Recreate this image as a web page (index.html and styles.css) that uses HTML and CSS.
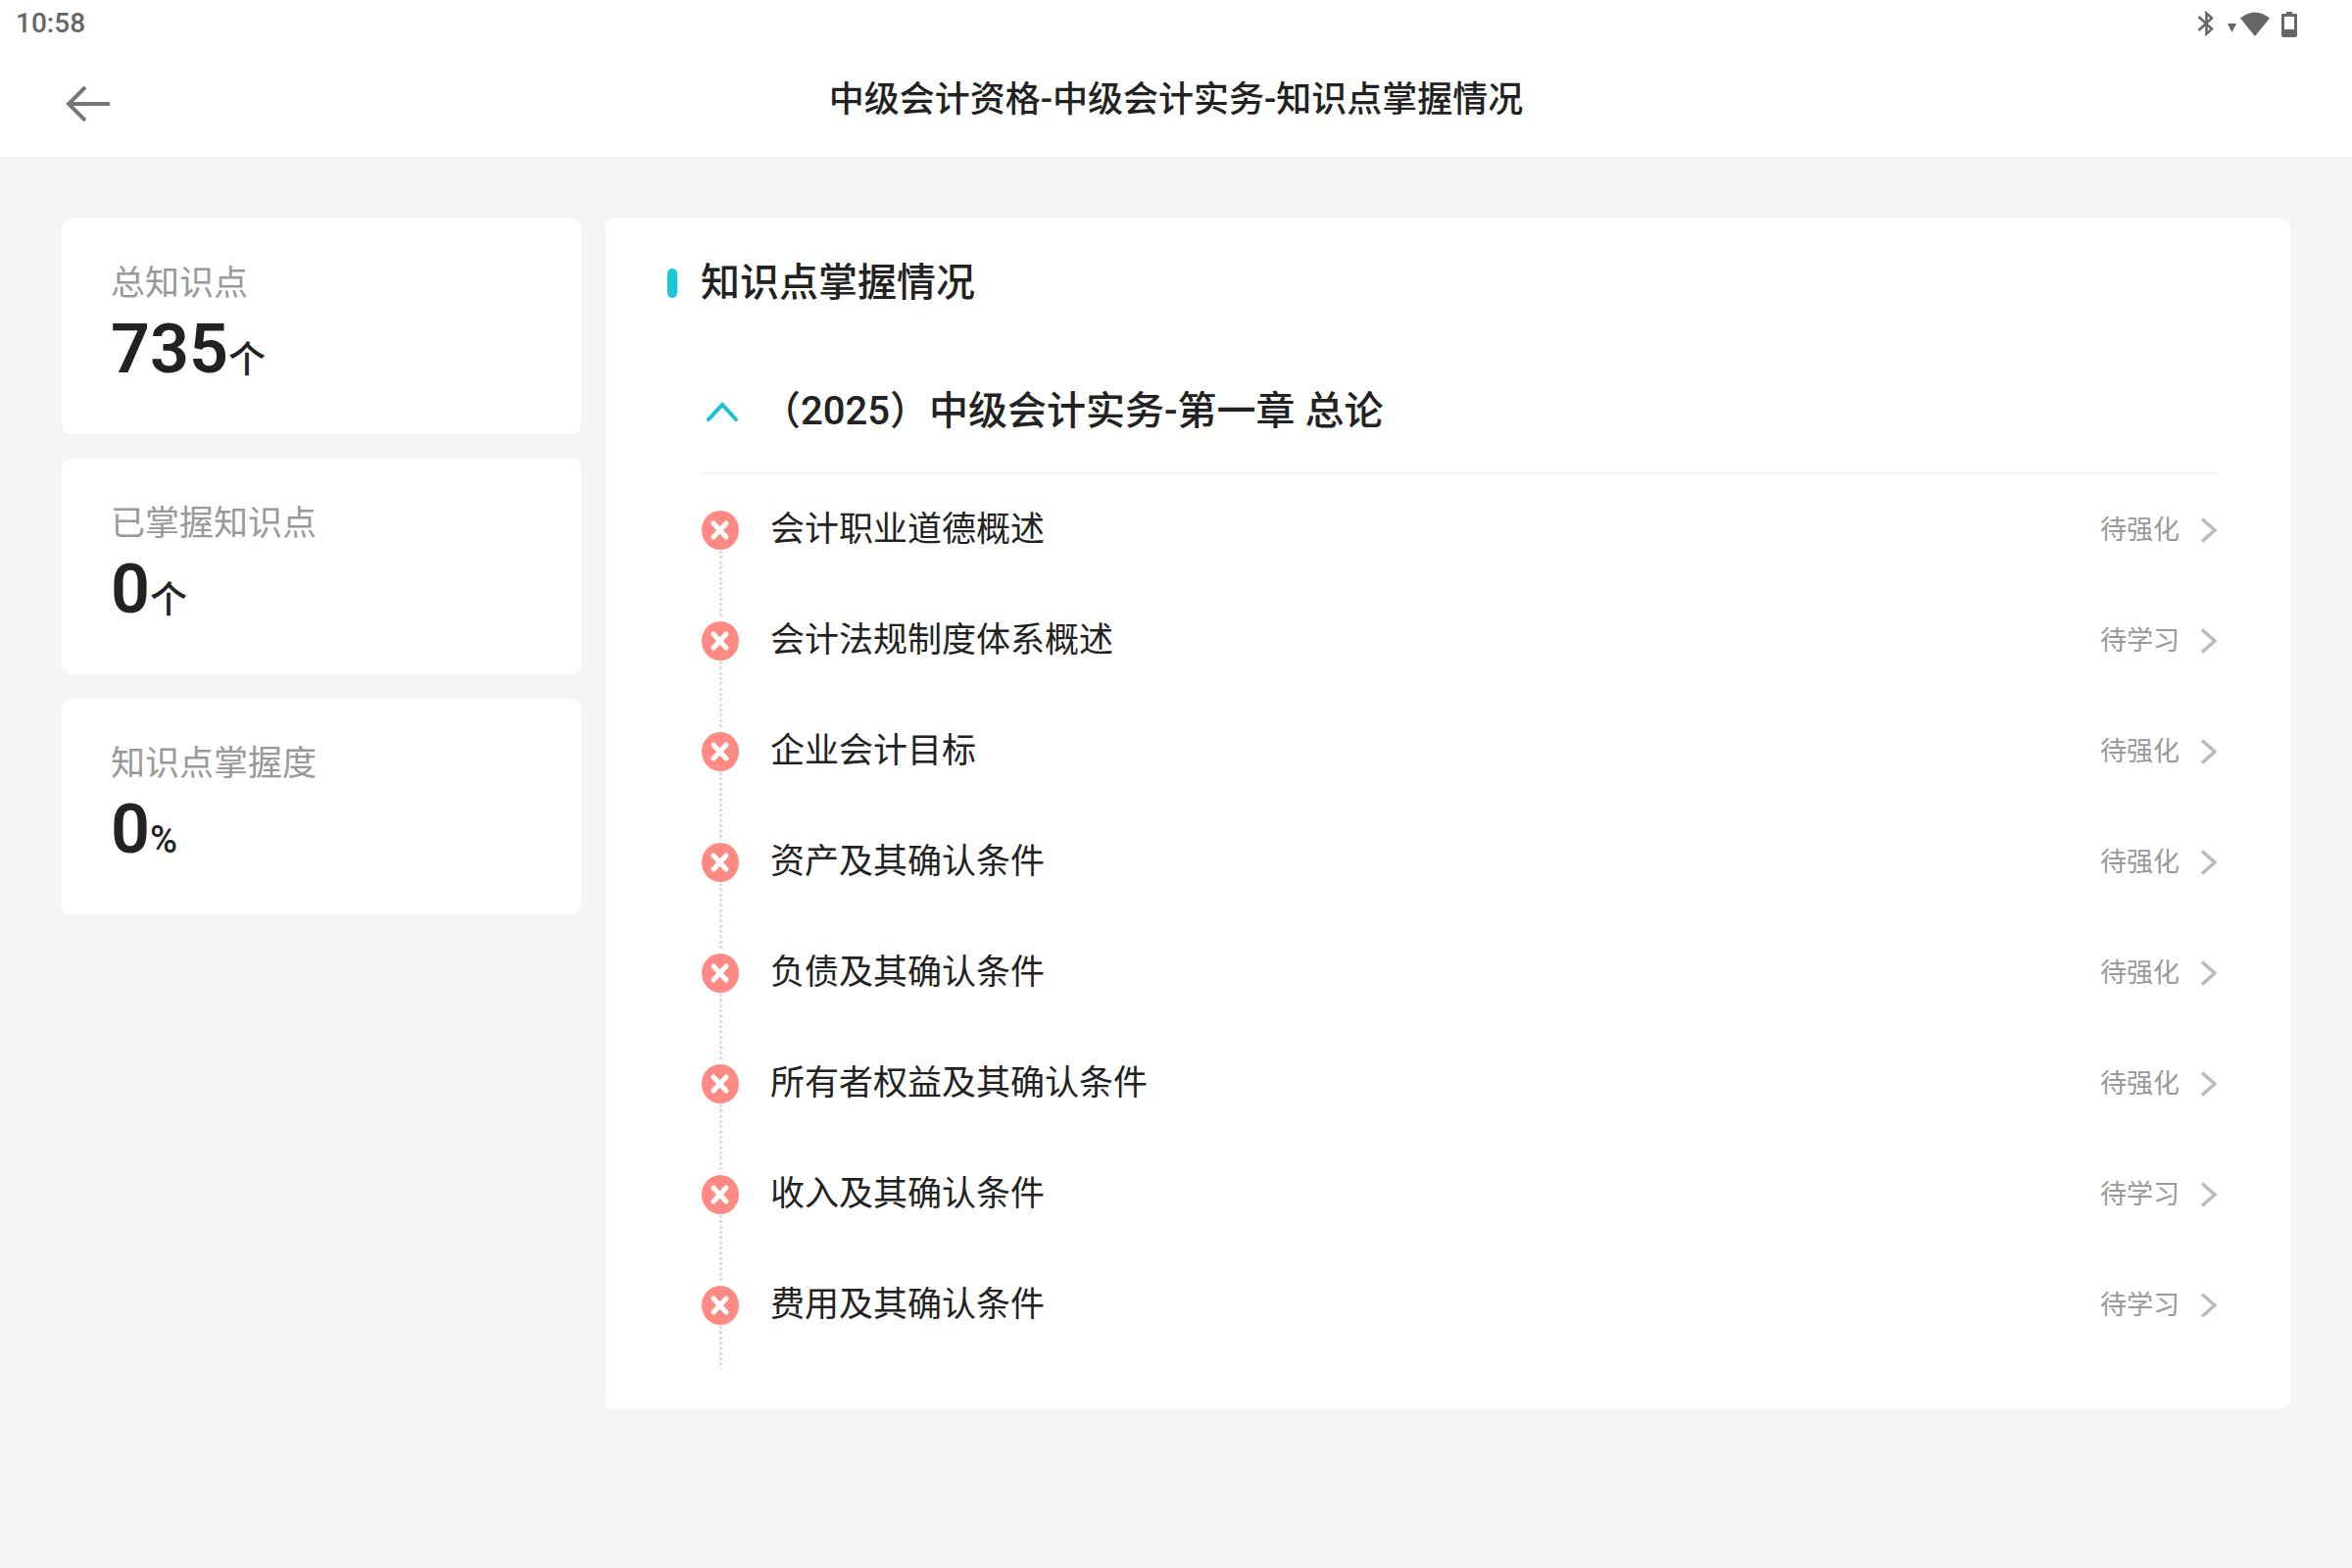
FILE: index.html
```html
<!DOCTYPE html>
<html lang="zh-CN">
<head>
    <meta charset="UTF-8">
    <meta name="viewport" content="width=device-width, initial-scale=1.0">
    <title>中级会计资格-中级会计实务-知识点掌握情况</title>
    <link rel="stylesheet" href="styles.css">
</head>
<body>
    <!-- icons shared by the list rows -->
    <svg class="sprite" aria-hidden="true">
        <symbol id="icon-wrong" viewBox="0 0 38 40">
            <ellipse cx="19" cy="20" rx="19" ry="20" fill="#ff8a84"/>
            <path d="M12 13 25 27M25 13 12 27" stroke="#fff" stroke-width="5" stroke-linecap="round"/>
        </symbol>
        <symbol id="icon-next" viewBox="0 0 16 26">
            <path d="M1 1.500 14 13 1 24.500" fill="none" stroke="#bbb" stroke-width="3.500"/>
        </symbol>
    </svg>

    <div class="status-bar">
        <span class="clock">10:58</span>
        <svg class="status-icons" viewBox="0 0 102 28" aria-hidden="true">
            <path d="M1.500 7 15 19.500 9.500 24.500V3.500L15 8.500 1.500 21" fill="none" stroke="#666" stroke-width="2.500"/>
            <path d="M31 14h9l-4.500 9z" fill="#666"/>
            <path d="M44 8.500Q59-3.500 74 8.500L59 27z" fill="#666"/>
            <path d="M91 2h6v2h4q1 0 1 1v21q0 2-2 2H88q-2 0-2-2V5q0-1 1-1h4zM89 7v13h10V7z" fill="#666" fill-rule="evenodd"/>
        </svg>
    </div>

    <header class="header">
        <button type="button" class="back" aria-label="返回">
            <svg width="44" height="36" viewBox="0 0 44 36">
                <path d="M44 18H2M19 1 2 18 19 35" fill="none" stroke="#777" stroke-width="4"/>
            </svg>
        </button>
        <h1>中级会计资格-中级会计实务-知识点掌握情况</h1>
    </header>

    <main class="container">
        <aside class="stats">
            <div class="card">
                <div class="label">总知识点</div>
                <div class="value">735<span class="unit">个</span></div>
            </div>
            <div class="card">
                <div class="label">已掌握知识点</div>
                <div class="value">0<span class="unit">个</span></div>
            </div>
            <div class="card">
                <div class="label">知识点掌握度</div>
                <div class="value">0<span class="unit">%</span></div>
            </div>
        </aside>

        <section class="panel">
            <h2>知识点掌握情况</h2>
            <button type="button" class="chapter" aria-expanded="true">
                <svg width="32" height="20" viewBox="0 0 32 20" aria-hidden="true">
                    <path d="M2 18 16 3 30 18" fill="none" stroke="#13c4cf" stroke-width="4" stroke-linecap="round"/>
                </svg>
                <span>（2025）中级会计实务-第一章 总论</span>
            </button>
            <ul class="points">
                <li>
                    <svg class="mark"><use href="#icon-wrong"/></svg>
                    <a href="#"><span class="name">会计职业道德概述</span><span class="state">待强化</span><svg class="next"><use href="#icon-next"/></svg></a>
                </li>
                <li>
                    <svg class="mark"><use href="#icon-wrong"/></svg>
                    <a href="#"><span class="name">会计法规制度体系概述</span><span class="state">待学习</span><svg class="next"><use href="#icon-next"/></svg></a>
                </li>
                <li>
                    <svg class="mark"><use href="#icon-wrong"/></svg>
                    <a href="#"><span class="name">企业会计目标</span><span class="state">待强化</span><svg class="next"><use href="#icon-next"/></svg></a>
                </li>
                <li>
                    <svg class="mark"><use href="#icon-wrong"/></svg>
                    <a href="#"><span class="name">资产及其确认条件</span><span class="state">待强化</span><svg class="next"><use href="#icon-next"/></svg></a>
                </li>
                <li>
                    <svg class="mark"><use href="#icon-wrong"/></svg>
                    <a href="#"><span class="name">负债及其确认条件</span><span class="state">待强化</span><svg class="next"><use href="#icon-next"/></svg></a>
                </li>
                <li>
                    <svg class="mark"><use href="#icon-wrong"/></svg>
                    <a href="#"><span class="name">所有者权益及其确认条件</span><span class="state">待强化</span><svg class="next"><use href="#icon-next"/></svg></a>
                </li>
                <li>
                    <svg class="mark"><use href="#icon-wrong"/></svg>
                    <a href="#"><span class="name">收入及其确认条件</span><span class="state">待学习</span><svg class="next"><use href="#icon-next"/></svg></a>
                </li>
                <li>
                    <svg class="mark"><use href="#icon-wrong"/></svg>
                    <a href="#"><span class="name">费用及其确认条件</span><span class="state">待学习</span><svg class="next"><use href="#icon-next"/></svg></a>
                </li>
            </ul>
        </section>
    </main>
</body>
</html>
```
FILE: styles.css
```css
* {
    box-sizing: border-box;
}
body {
    margin: 0;
    min-height: 100vh;
    background: #f5f5f5;
    color: #222;
    font-family: Roboto, 'Noto Sans CJK SC', sans-serif;
}
h1, h2, ul {
    margin: 0;
    padding: 0;
}
button {
    padding: 0;
    border: 0;
    background: none;
    color: inherit;
    font: inherit;
    cursor: pointer;
}
svg {
    display: block;
    flex: none;
}
.sprite {
    position: absolute;
    width: 0;
    height: 0;
}

/* top bars */
.status-bar {
    display: flex;
    justify-content: space-between;
    align-items: center;
    height: 48px;
    padding: 0 56px 0 16px;
    background: #fff;
}
.clock {
    color: #666;
    font-size: 28px;
    font-weight: 500;
    line-height: 32px;
}
.status-icons {
    width: 102px;
    height: 28px;
}
.header {
    display: grid;
    grid-template-columns: 1fr auto 1fr;
    align-items: start;
    height: 112px;
    padding: 28px 68px;
    background: #fff;
}
.header h1 {
    font-size: 36px;
    font-weight: 500;
    line-height: 52px;
}
.back {
    justify-self: start;
    padding: 12px 0;
}

.container {
    display: flex;
    align-items: flex-start;
    gap: 25px;
    padding: 63px;
}

/* left column */
.stats {
    display: flex;
    flex-direction: column;
    flex: none;
    gap: 25px;
    width: 530px;
}
.card {
    padding: 42px 50px 46px;
    border-radius: 10px;
    background: #fff;
}
.label {
    color: #999;
    font-size: 35px;
    line-height: 50px;
}
.value {
    font-size: 70px;
    font-weight: 600;
    line-height: 82px;
}
.unit {
    font-size: 38px;
    font-weight: 500;
    line-height: 40px;
}

/* knowledge point list */
.panel {
    flex: 1;
    padding: 36px 75px 40px 63px;
    border-radius: 8px;
    background: #fff;
}
.panel h2 {
    display: flex;
    align-items: center;
    gap: 24px;
    font-size: 40px;
    font-weight: 500;
    line-height: 60px;
}
.panel h2::before {
    content: '';
    width: 10px;
    height: 30px;
    border-radius: 5px;
    background: #13cbd6;
}
.chapter {
    display: flex;
    align-items: center;
    gap: 24px;
    width: calc(100% - 35px);
    height: 130px;
    margin: 35px 0 0 35px;
    padding: 4px 5px 0;
    border-bottom: 2px solid #f5f5f5;
    font-size: 40px;
    font-weight: 500;
    line-height: 60px;
}
.points {
    margin: 37px 0 0 35px;
    list-style: none;
}
.points li {
    display: grid;
    grid-template-columns: 38px 1fr;
    grid-template-rows: 40px 1fr;
    column-gap: 32px;
    height: 113px;
}
.points li::after {
    content: '';
    justify-self: center;
    width: 3px;
    margin: 1px 0 4px;
    background: repeating-linear-gradient(#ddd 0 3px, transparent 3px 5px, #ddd 5px 8px, transparent 8px 11px, #ddd 11px 14px, transparent 14px 16px);
}
.points li:last-child {
    height: 85px;
}
.points li:last-child::after {
    margin-bottom: 0;
}
.points a {
    display: flex;
    align-items: center;
    color: inherit;
    text-decoration: none;
}
.mark {
    width: 38px;
    height: 40px;
}
.name {
    flex: 1;
    font-size: 35px;
    line-height: 40px;
}
.state {
    color: #999;
    font-size: 27px;
    line-height: 40px;
}
.next {
    width: 16px;
    height: 26px;
    margin-left: 22px;
}
```
